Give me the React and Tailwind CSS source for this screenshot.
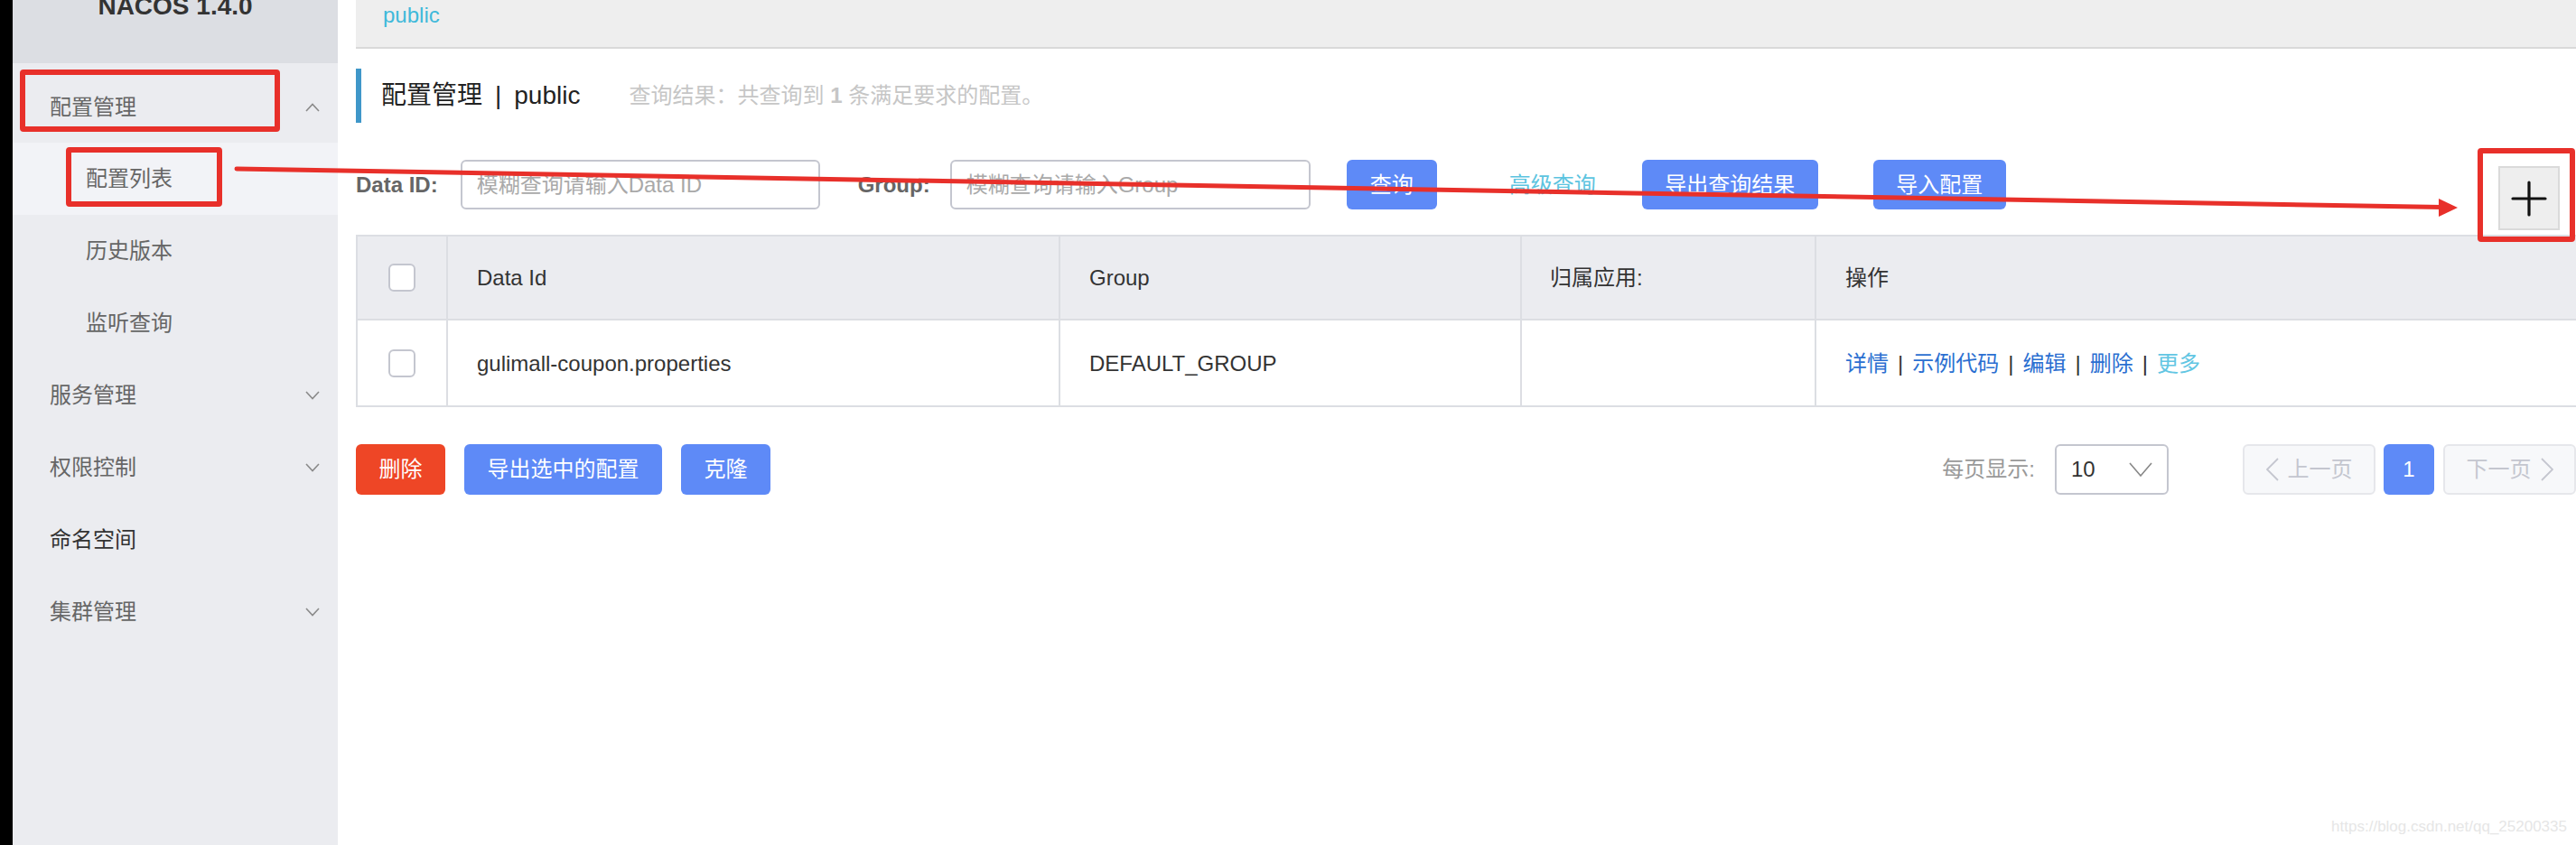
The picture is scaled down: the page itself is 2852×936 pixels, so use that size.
import React from "react";

const menu = [
  { label: "服务管理", arrow: "down" },
  { label: "权限控制", arrow: "down" },
  { label: "命名空间", dark: true },
  { label: "集群管理", arrow: "down" },
];

const Chevron = ({ dir }) => (
  <svg width="16" height="10" viewBox="0 0 16 10" className="text-[#8a8a8a]">
    {dir === "up" ? (
      <path d="M1 9 L8 1.5 L15 9" fill="none" stroke="currentColor" strokeWidth="1.6" />
    ) : (
      <path d="M1 1 L8 8.5 L15 1" fill="none" stroke="currentColor" strokeWidth="1.6" />
    )}
  </svg>
);

const App = () => {
  return (
    <div className="relative flex w-[2852px] h-[936px] overflow-hidden bg-white font-['Liberation_Sans','Noto_Sans_CJK_SC',sans-serif]">
      {/* black strip on the left edge */}
      <div className="w-[14px] shrink-0 bg-black" />

      {/* sidebar */}
      <div className="w-[360px] shrink-0 bg-[#ebecf0] flex flex-col">
        <div className="h-[70px] bg-[#dcdee3] overflow-hidden">
          <div className="mt-[-7px] text-center text-[28px] leading-[28px] font-bold text-[#333]">NACOS 1.4.0</div>
        </div>
        <div className="h-[88px] pt-[10px] flex items-center justify-between pl-[41px] pr-[20px] text-[24px] text-[#666]">
          <span>配置管理</span>
          <Chevron dir="up" />
        </div>
        <div className="h-[80px] flex items-center pl-[81px] bg-[#f2f3f7] text-[24px] text-[#666]">配置列表</div>
        <div className="h-[80px] flex items-center pl-[81px] text-[24px] text-[#666]">历史版本</div>
        <div className="h-[80px] flex items-center pl-[81px] text-[24px] text-[#666]">监听查询</div>
        {menu.map(m => (
          <div
            key={m.label}
            className={`h-[80px] flex items-center justify-between pl-[41px] pr-[20px] text-[24px] ${
              m.dark ? "text-[#333]" : "text-[#666]"
            }`}
          >
            <span>{m.label}</span>
            {m.arrow && <Chevron dir={m.arrow} />}
          </div>
        ))}
      </div>

      {/* main */}
      <div className="flex-1 min-w-0 pl-[20px] flex flex-col">
        <div className="h-[54px] shrink-0 bg-[#eeeeee] border-b-2 border-[#d9d9d9] pl-[30px] pt-[5px]">
          <span className="text-[24px] leading-[24px] text-[#3fb9da]">public</span>
        </div>

        {/* title */}
        <div className="mt-[22px] h-[60px] flex items-center border-l-[6px] border-[#3f97c9] pl-[22px]">
          <span className="text-[28px] text-[#222]">配置管理</span>
          <span className="mx-[14px] text-[28px] text-[#222]">|</span>
          <span className="text-[28px] text-[#222]">public</span>
          <span className="ml-[54px] text-[24px] text-[#c6c6c6]">
            查询结果：共查询到 <b>1</b> 条满足要求的配置。
          </span>
        </div>

        {/* search row */}
        <div className="mt-[41px] flex items-start">
          <div className="h-[55px] flex items-center text-[24px] font-bold text-[#666]">Data ID:</div>
          <div className="ml-[25px] w-[398px] h-[55px] border-2 border-[#c4c6cf] rounded-[6px] flex items-center pl-[16px] text-[24px] text-[#a9a9a9]">
            模糊查询请输入Data ID
          </div>
          <div className="ml-[42px] h-[55px] flex items-center text-[24px] font-bold text-[#666]">Group:</div>
          <div className="ml-[22px] w-[399px] h-[55px] border-2 border-[#c4c6cf] rounded-[6px] flex items-center pl-[16px] text-[24px] text-[#a9a9a9]">
            模糊查询请输入Group
          </div>
          <button className="ml-[40px] w-[100px] h-[55px] rounded-[6px] bg-[#5e8af7] text-white text-[24px]">查询</button>
          <div className="ml-[80px] h-[55px] flex items-center text-[24px] text-[#5cc4e0]">高级查询</div>
          <button className="ml-[51px] w-[195px] h-[55px] rounded-[6px] bg-[#5e8af7] text-white text-[24px]">导出查询结果</button>
          <button className="ml-[61px] w-[147px] h-[55px] rounded-[6px] bg-[#5e8af7] text-white text-[24px]">导入配置</button>
          <button className="ml-auto mr-[18px] mt-[7px] w-[68px] h-[71px] bg-[#eeeeee] border-2 border-[#dadada] flex items-center justify-center">
            <svg width="40" height="40" viewBox="0 0 40 40">
              <path d="M20 2 V38 M2 20 H38" stroke="#111" strokeWidth="3.2" strokeLinecap="round" />
            </svg>
          </button>
        </div>

        {/* table */}
        <div className="mt-[5px] w-[2520px] border-2 border-r-0 border-[#dcdee3] text-[24px] text-[#333]">
          <div className="grid grid-cols-[98px_678px_511px_326px_907px] h-[93px] bg-[#ebecf0] border-b-2 border-[#dcdee3]">
            <div className="flex items-center justify-center">
              <span className="w-[30px] h-[31px] rounded-[6px] border-2 border-[#c4c6cf] bg-white" />
            </div>
            <div className="border-l-2 border-[#dcdee3] flex items-center pl-[32px]">Data Id</div>
            <div className="border-l-2 border-[#dcdee3] flex items-center pl-[32px]">Group</div>
            <div className="border-l-2 border-[#dcdee3] flex items-center pl-[31px]">归属应用:</div>
            <div className="border-l-2 border-[#dcdee3] flex items-center pl-[32px]">操作</div>
          </div>
          <div className="grid grid-cols-[98px_678px_511px_326px_907px] h-[94px] bg-white">
            <div className="flex items-center justify-center">
              <span className="w-[30px] h-[31px] rounded-[6px] border-2 border-[#c4c6cf] bg-white" />
            </div>
            <div className="border-l-2 border-[#dcdee3] flex items-center pl-[32px] pt-[2px]">gulimall-coupon.properties</div>
            <div className="border-l-2 border-[#dcdee3] flex items-center pl-[32px] pt-[2px]">DEFAULT_GROUP</div>
            <div className="border-l-2 border-[#dcdee3]" />
            <div className="border-l-2 border-[#dcdee3] flex items-center pl-[32px] pt-[2px] gap-[10px]">
              <span className="text-[#2b6fd1]">详情</span>
              <span>|</span>
              <span className="text-[#2b6fd1]">示例代码</span>
              <span>|</span>
              <span className="text-[#2b6fd1]">编辑</span>
              <span>|</span>
              <span className="text-[#2b6fd1]">删除</span>
              <span>|</span>
              <span className="text-[#62c6e3]">更多</span>
            </div>
          </div>
        </div>

        {/* bottom bar */}
        <div className="mt-[41px] flex items-center">
          <button className="w-[99px] h-[56px] rounded-[6px] bg-[#ee4626] text-white text-[24px]">删除</button>
          <button className="ml-[21px] w-[219px] h-[56px] rounded-[6px] bg-[#5e8af7] text-white text-[24px]">导出选中的配置</button>
          <button className="ml-[21px] w-[99px] h-[56px] rounded-[6px] bg-[#5e8af7] text-white text-[24px]">克隆</button>

          <div className="ml-auto flex items-center">
            <span className="text-[24px] text-[#999]">每页显示:</span>
            <div className="ml-[22px] w-[126px] h-[56px] border-2 border-[#c4c6cf] rounded-[6px] flex items-center justify-between pl-[16px] pr-[16px]">
              <span className="text-[24px] text-[#333]">10</span>
              <svg width="26" height="16" viewBox="0 0 26 16">
                <path d="M1 1 L13 15 L25 1" fill="none" stroke="#888" strokeWidth="1.6" />
              </svg>
            </div>
            <div className="ml-[82px] w-[147px] h-[56px] rounded-[6px] border-2 border-[#e6e7eb] bg-[#f7f8fa] flex items-center justify-center gap-[10px] text-[24px] text-[#c4c6cf]">
              <svg width="14" height="26" viewBox="0 0 14 26">
                <path d="M13 1 L1 13 L13 25" fill="none" stroke="#c4c6cf" strokeWidth="1.8" />
              </svg>
              <span>上一页</span>
            </div>
            <div className="ml-[9px] w-[56px] h-[56px] rounded-[6px] bg-[#5e8af7] flex items-center justify-center text-[24px] text-white">1</div>
            <div className="ml-[10px] w-[147px] h-[56px] rounded-[6px] border-2 border-[#e6e7eb] bg-[#f7f8fa] flex items-center justify-center gap-[10px] text-[24px] text-[#c4c6cf]">
              <span>下一页</span>
              <svg width="14" height="26" viewBox="0 0 14 26">
                <path d="M1 1 L13 13 L1 25" fill="none" stroke="#c4c6cf" strokeWidth="1.8" />
              </svg>
            </div>
          </div>
        </div>
      </div>

      {/* red annotations drawn over the screenshot */}
      <div className="absolute left-[22px] top-[77px] w-[288px] h-[69px] border-[6px] border-[#e8302a] rounded-[4px]" />
      <div className="absolute left-[73px] top-[163px] w-[173px] h-[66px] border-[6px] border-[#e8302a] rounded-[4px]" />
      <div className="absolute left-[2743px] top-[164px] w-[108px] h-[104px] border-[6px] border-[#e8302a] rounded-[4px]" />
      <svg className="absolute left-0 top-0 pointer-events-none" width="2852" height="936">
        <line x1="262" y1="187" x2="2704" y2="229.5" stroke="#e8302a" strokeWidth="5" strokeLinecap="round" />
        <polygon points="2721,230 2700,220 2700,240" fill="#e8302a" />
      </svg>

      {/* watermark */}
      <div className="absolute right-[10px] bottom-[8px] text-[17px] text-[#e6e6e6]">https://blog.csdn.net/qq_25200335</div>
    </div>
  );
};

export default App;
